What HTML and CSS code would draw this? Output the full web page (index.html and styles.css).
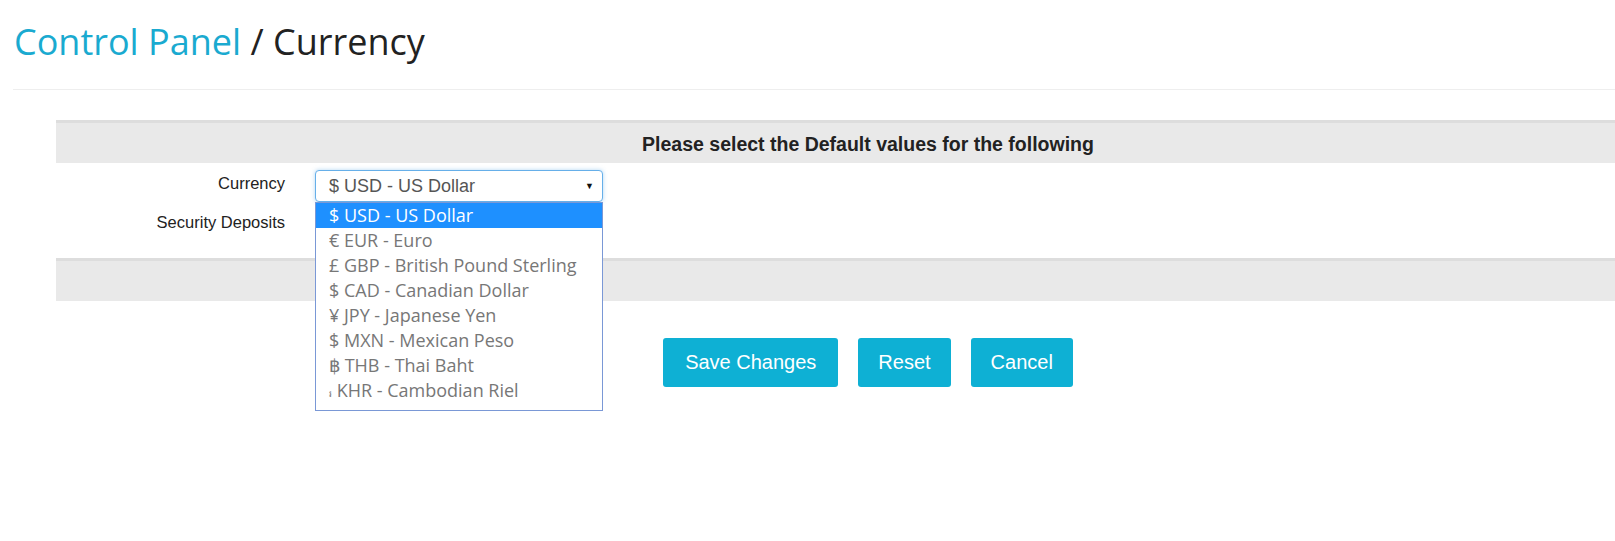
FILE: index.html
```html
<!DOCTYPE html>
<html>
<head>
<meta charset="utf-8">
<link rel="stylesheet" href="styles.css">
</head>
<body>
<div class="page">
  <h1 class="title"><span class="crumb">Control Panel</span> / Currency</h1>
  <div class="divider"></div>
  <div class="panel">
    <div class="band band-head">Please select the Default values for the following</div>
    <div class="rows">
      <div class="row row-currency">
        <div class="label">Currency</div>
        <div class="field">
          <div class="select">
            <span class="select-text">$ USD - US Dollar</span>
            <span class="caret">&#9660;</span>
          </div>
          <ul class="dropdown">
            <li class="opt active">$ USD - US Dollar</li>
            <li class="opt">€ EUR - Euro</li>
            <li class="opt">£ GBP - British Pound Sterling</li>
            <li class="opt">$ CAD - Canadian Dollar</li>
            <li class="opt">¥ JPY - Japanese Yen</li>
            <li class="opt">$ MXN - Mexican Peso</li>
            <li class="opt">฿ THB - Thai Baht</li>
            <li class="opt"><span class="riel">៛</span> KHR - Cambodian Riel</li>
          </ul>
        </div>
      </div>
      <div class="row row-deposit">
        <div class="label">Security Deposits</div>
        <div class="field"></div>
      </div>
    </div>
    <div class="band band-foot"></div>
    <div class="actions">
      <button class="btn">Save Changes</button>
      <button class="btn">Reset</button>
      <button class="btn">Cancel</button>
    </div>
  </div>
</div>
</body>
</html>
```

FILE: styles.css
```css
html {
  overflow: hidden;
  height: 100%;
}
html, body {
  margin: 0;
  padding: 0;
  background: #fff;
}
body {
  min-height: 100%;
  font-family: "Liberation Sans", Arial, sans-serif;
  color: #333;
}
.page {
  padding: 0 0 160px 13px;
}
.title {
  margin: 0;
  padding: 18px 0 0 1px;
  font-family: "Open Sans", sans-serif;
  font-weight: 400;
  font-size: 36px;
  line-height: 48px;
  color: #222;
}
.crumb {
  color: #1aaad0;
}
.divider {
  margin-top: 23px;
  height: 1px;
  background: #eeeeee;
}
.panel {
  margin: 30px 0 0 43px;
  width: 1624px;
}
.band {
  border-top: 3px solid #dddddd;
  background: #e9e9e9;
  height: 40px;
}
.band-head {
  font-weight: bold;
  font-size: 19.5px;
  line-height: 42px;
  text-align: center;
  color: #222;
}
.rows {
  height: 95px;
}
.row {
  display: flex;
  align-items: flex-start;
}
.label {
  width: 229px;
  text-align: right;
  font-size: 16.5px;
  color: #222;
}
.field {
  position: relative;
  margin-left: 30px;
}
.row-currency {
  padding-top: 7px;
  height: 38px;
}
.row-currency .label {
  padding-top: 4px;
}
.row-deposit .label {
  padding-top: 5px;
}
.select {
  box-sizing: border-box;
  width: 288px;
  height: 32px;
  border: 1px solid #66afe9;
  border-radius: 4px;
  box-shadow: 0 0 4px rgba(102, 175, 233, 0.5);
  display: flex;
  align-items: center;
  justify-content: space-between;
  padding: 0 8px 0 13px;
  font-size: 18px;
  color: #555;
  background: #fff;
}
.caret {
  font-size: 9px;
  color: #111;
}
.dropdown {
  position: absolute;
  top: 32px;
  left: 0;
  box-sizing: border-box;
  width: 288px;
  margin: 0;
  padding: 0 0 7px 0;
  list-style: none;
  border: 1px solid #7a98d6;
  background: #fff;
  z-index: 5;
}
.opt {
  height: 25px;
  line-height: 25px;
  padding-left: 13px;
  font-family: "Open Sans", sans-serif;
  font-size: 18px;
  color: #777;
  white-space: nowrap;
}
.opt.active {
  background: #1e90ff;
  color: #fff;
}
.riel {
  font-size: 9px;
}
.actions {
  display: flex;
  justify-content: center;
  gap: 20px;
  padding-top: 37px;
}
.btn {
  height: 49px;
  padding: 0 20px;
  border: none;
  border-radius: 3px;
  background: #0eb0d4;
  color: #fff;
  font-family: "Liberation Sans", Arial, sans-serif;
  font-size: 20px;
}
.btn:first-child {
  padding: 0 22px;
}
```
